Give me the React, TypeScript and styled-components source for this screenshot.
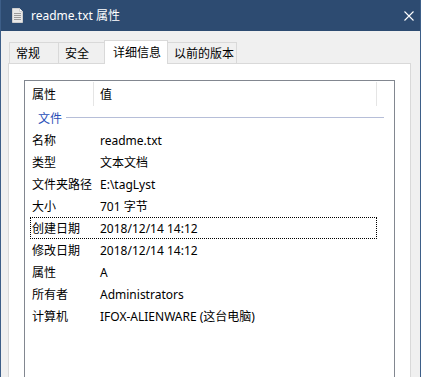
import React from "react";
import styled, { createGlobalStyle } from "styled-components";

const Global = createGlobalStyle`
  html, body { margin: 0; padding: 0; background: #f0f0f0; }
  body { font-family: "Noto Sans", "Noto Sans CJK SC", sans-serif; font-size: 12px; color: #000; }
`;

const Window = styled.div`
  width: 421px;
  height: 377px;
  box-sizing: border-box;
  border-left: 1px solid #3d5e88;
  border-right: 1px solid #3d5e88;
  background: #f0f0f0;
  overflow: hidden;
  display: flex;
  flex-direction: column;
`;

const TitleBar = styled.div`
  height: 31px;
  flex: none;
  background: #2d4b71;
  display: flex;
  align-items: center;
  padding-left: 11px;
  color: #fff;
`;

const TitleText = styled.span`
  margin-left: 8px;
  font-size: 12px;
  line-height: 31px;
  flex: 1;
  padding-bottom: 1px;
`;

const CloseBtn = styled.div`
  width: 46px;
  height: 31px;
  display: flex;
  align-items: center;
  justify-content: center;
  margin-right: -12px;
`;

const Body = styled.div`
  flex: 1;
  padding: 9px 9px 0 7px;
  display: flex;
  flex-direction: column;
`;

const TabRow = styled.div`
  display: flex;
  align-items: flex-end;
  height: 24px;
  padding-left: 2px;
  position: relative;
  z-index: 1;
  margin-bottom: -1px;
`;

const Tab = styled.div<{ $w: number; $active?: boolean }>`
  box-sizing: border-box;
  width: ${(p) => p.$w}px;
  height: ${(p) => (p.$active ? 24 : 22)}px;
  border: 1px solid #d9d9d9;
  border-bottom: ${(p) => (p.$active ? "none" : "1px solid #d9d9d9")};
  margin-left: -1px;
  background: ${(p) => (p.$active ? "#fff" : "#f0f0f0")};
  display: flex;
  align-items: center;
  padding-left: ${(p) => (p.$active ? 8 : 6)}px;
  padding-bottom: ${(p) => (p.$active ? 2 : 0)}px;
  white-space: nowrap;
`;

const Panel = styled.div`
  flex: 1;
  background: #fff;
  border: 1px solid #d9d9d9;
  border-bottom: none;
  padding: 16px 15px 0 15px;
  display: flex;
  flex-direction: column;
`;

const ListBox = styled.div`
  flex: 1;
  border: 1px solid #828790;
  border-bottom: none;
  display: flex;
  flex-direction: column;
`;

const Header = styled.div`
  height: 25px;
  display: flex;
  align-items: stretch;
`;

const HeaderCell = styled.div<{ $w?: number; $divider?: boolean }>`
  box-sizing: border-box;
  width: ${(p) => (p.$w ? `${p.$w}px` : "auto")};
  flex: ${(p) => (p.$w ? "none" : "1")};
  padding-left: ${(p) => (p.$divider ? 7 : 6)}px;
  display: flex;
  align-items: center;
  border-right: ${(p) => (p.$divider ? "1px solid #e5e5e5" : "none")};
  margin: 1px 0 0;
`;

const HeaderTail = styled.div`
  width: 17px;
  border-left: 1px solid #e5e5e5;
  margin-top: 1px;
`;

const Group = styled.div`
  height: 23px;
  display: flex;
  align-items: center;
  padding-left: 13px;
  padding-right: 10px;
  color: #2a4fb8;
`;

const GroupLine = styled.div`
  flex: 1;
  height: 1px;
  background: #b6bed8;
  margin-left: 4px;
  margin-top: -1px;
`;

const Row = styled.div<{ $focus?: boolean }>`
  box-sizing: border-box;
  height: 22px;
  margin-left: 5px;
  width: 347px;
  display: flex;
  align-items: center;
  border: 1px dotted ${(p) => (p.$focus ? "#000" : "transparent")};
  border-bottom-width: 1px;
  padding-left: 1px;
  white-space: nowrap;
`;

const Label = styled.span`
  width: 68px;
  flex: none;
`;

const Value = styled.span``;

const DocIcon = () => (
  <svg width="11" height="15" viewBox="0 0 11 15">
    <path d="M0.5 0.5 H7.5 L10.5 3.5 V14.5 H0.5 Z" fill="#e8e8e8" stroke="#cfcfcf" />
    <path d="M7.5 0.5 V3.5 H10.5" fill="#fff" stroke="#cfcfcf" />
    {[5, 7, 9, 11].map((y) => (
      <line key={y} x1="2" x2="9" y1={y + 0.5} y2={y + 0.5} stroke="#9a9a9a" />
    ))}
  </svg>
);

const CloseIcon = () => (
  <svg width="10" height="10" viewBox="0 0 10 10">
    <path d="M0.5 0.5 L9.5 9.5 M9.5 0.5 L0.5 9.5" stroke="#fff" strokeWidth="1.1" />
  </svg>
);

const rows: [string, string][] = [
  ["名称", "readme.txt"],
  ["类型", "文本文档"],
  ["文件夹路径", "E:\\tagLyst"],
  ["大小", "701 字节"],
  ["创建日期", "2018/12/14 14:12"],
  ["修改日期", "2018/12/14 14:12"],
  ["属性", "A"],
  ["所有者", "Administrators"],
  ["计算机", "IFOX-ALIENWARE (这台电脑)"],
];

export default function App() {
  return (
    <Window>
      <Global />
      <TitleBar>
        <DocIcon />
        <TitleText>readme.txt 属性</TitleText>
        <CloseBtn>
          <CloseIcon />
        </CloseBtn>
      </TitleBar>
      <Body>
        <TabRow>
          <Tab $w={50}>常规</Tab>
          <Tab $w={47}>安全</Tab>
          <Tab $w={64} $active>详细信息</Tab>
          <Tab $w={70}>以前的版本</Tab>
        </TabRow>
        <Panel>
          <ListBox>
            <Header>
              <HeaderCell $w={69} $divider>属性</HeaderCell>
              <HeaderCell>值</HeaderCell>
              <HeaderTail />
            </Header>
            <Group>
              文件
              <GroupLine />
            </Group>
            {rows.map(([k, v], i) => (
              <Row key={k} $focus={i === 4}>
                <Label>{k}</Label>
                <Value>{v}</Value>
              </Row>
            ))}
          </ListBox>
        </Panel>
      </Body>
    </Window>
  );
}
